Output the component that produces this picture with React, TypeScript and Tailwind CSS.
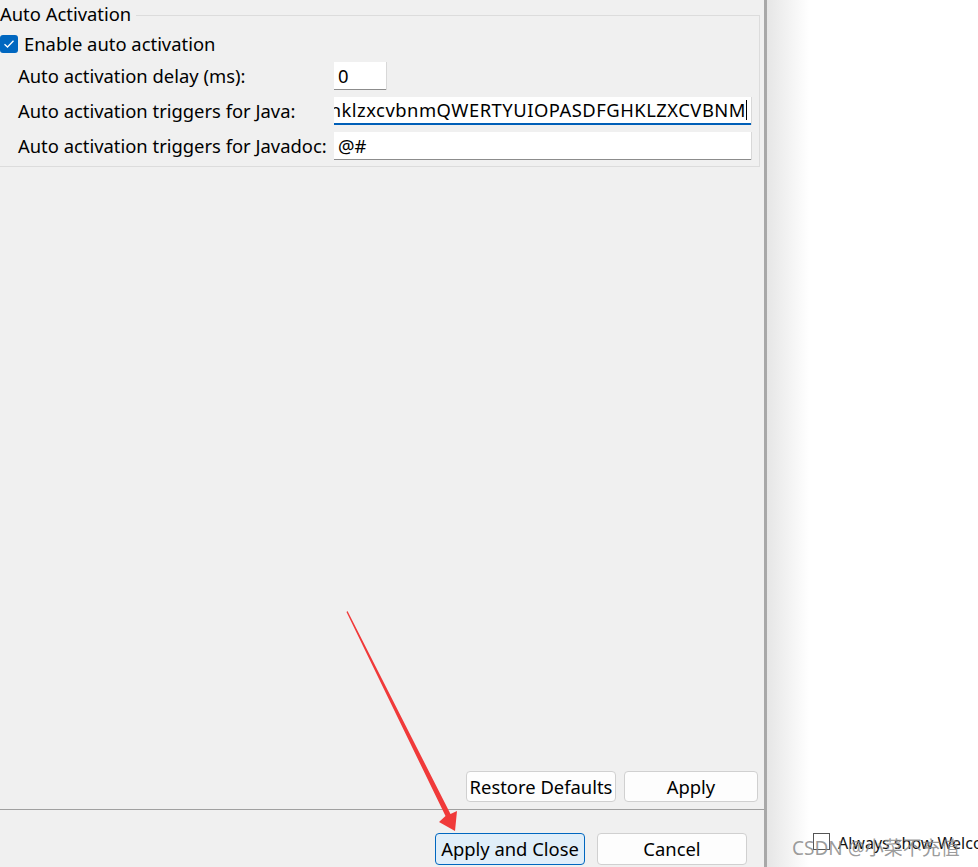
import React from 'react';

const font = { fontFamily: '"Noto Sans", "Noto Sans CJK SC", sans-serif' };

function Field({ value, width, focused }: { value: string; width: string; focused?: boolean }) {
  return (
    <div
      className={`${width} shrink-0 h-[28px] bg-white flex items-center overflow-hidden pl-[4px] pr-[4px] shadow-[1px_0_0_#d8d8d8] ${
        focused ? 'border-b-2 border-[#005fb8] justify-end' : 'border-b border-[#8c8c8c]'
      }`}
    >
      <span className={`whitespace-nowrap text-black ${focused ? 'tracking-[0.5px]' : ''}`}>{value}</span>
      {focused && <span className="w-px h-[20px] bg-black shrink-0" />}
    </div>
  );
}

function Row({ label, children }: { label: string; children: React.ReactNode }) {
  return (
    <div className="flex items-center h-[28px]">
      <div className="w-[334px] shrink-0 pl-[18px] whitespace-nowrap">{label}</div>
      {children}
    </div>
  );
}

function Button({ label, width, primary }: { label: string; width: string; primary?: boolean }) {
  return (
    <div
      className={`${width} shrink-0 flex items-center justify-center rounded-[4px] border ${
        primary ? 'bg-[#e0eef9] border-[#0067c0]' : 'bg-[#fdfdfd] border-[#d0d0d0]'
      }`}
    >
      {label}
    </div>
  );
}

export default function App() {
  return (
    <div className="w-[978px] h-[867px] overflow-hidden flex relative text-[18.4px] text-black" style={font}>
      {/* preferences page */}
      <div className="w-[764px] shrink-0 h-full bg-[#f0f0f0] flex flex-col">
        <div className="w-[760px]">
          <div className="flex h-[30px]">
            <span className="leading-[30px] -mt-[1px]">Auto Activation</span>
            <div className="flex-1 ml-[5px] mt-[15px] border-t border-r border-[#dcdcdc]" />
          </div>
          <div className="border-r border-b border-[#dcdcdc] pb-[6px]">
            <div className="flex items-center h-[28px] gap-[6px]">
              <div className="w-[18px] h-[18px] rounded-[3px] bg-[#0067c0] flex items-center justify-center">
                <svg width="12" height="10" viewBox="0 0 12 10">
                  <path d="M1.5 5.2 L4.5 8 L10.5 1.8" stroke="white" strokeWidth="1.3" fill="none" />
                </svg>
              </div>
              <span>Enable auto activation</span>
            </div>
            <div className="flex flex-col gap-[7px] mt-[4px]">
              <Row label="Auto activation delay (ms):">
                <Field value="0" width="w-[52px]" />
              </Row>
              <Row label="Auto activation triggers for Java:">
                <Field
                  value=".qwertyuiopasdfghklzxcvbnmQWERTYUIOPASDFGHKLZXCVBNM"
                  width="w-[417px]"
                  focused
                />
              </Row>
              <Row label="Auto activation triggers for Javadoc:">
                <Field value="@#" width="w-[417px]" />
              </Row>
            </div>
          </div>
        </div>

        <div className="flex-1" />

        <div className="flex justify-end gap-[8px] pr-[6px] h-[31px]">
          <Button label="Restore Defaults" width="w-[150px]" />
          <Button label="Apply" width="w-[134px]" />
        </div>
        <div className="h-px bg-[#a0a0a0] mt-[7px]" />
        <div className="flex justify-end gap-[12px] pr-[17px] h-[32px] mt-[23px] mb-[2px]">
          <Button label="Apply and Close" width="w-[150px]" primary />
          <Button label="Cancel" width="w-[150px]" />
        </div>
      </div>

      {/* sash */}
      <div className="w-[3px] shrink-0 h-full bg-[#a8a8a8]" />

      {/* welcome page */}
      <div className="flex-1 min-w-0 h-full bg-gradient-to-r from-[#e6e6e6] via-white via-[20%] to-white flex flex-col justify-end">
        <div className="flex items-center gap-[8px] pl-[46px] h-[18px] mb-[17px] text-[16px] text-[#111] whitespace-nowrap">
          <div className="w-[17px] h-[17px] border border-[#555] bg-white shrink-0" />
          <span className="mt-[4px]">Always show Welcome at start up</span>
        </div>
      </div>

      {/* watermark */}
      <div className="absolute left-[792px] top-[834px] text-[19px] text-[#8a8a8a]/85 whitespace-nowrap">
        CSDN @小菜不充值
      </div>

      {/* red annotation arrow */}
      <svg className="absolute left-0 top-0 pointer-events-none" width="978" height="867">
        <polygon
          points="347.5,611 450.5,814 457,811 455,831 439,822 445.5,816 346.5,612"
          fill="#f03a3a"
        />
      </svg>
    </div>
  );
}
